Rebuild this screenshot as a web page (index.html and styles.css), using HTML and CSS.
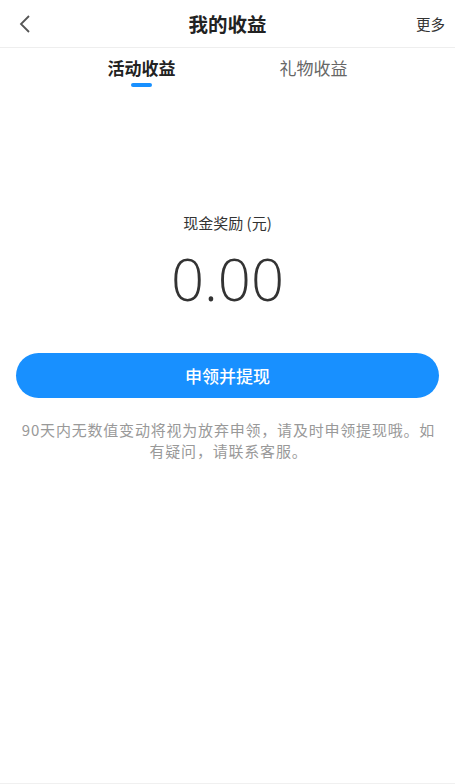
FILE: index.html
```html
<!DOCTYPE html>
<html>
<head lang="zh">
    <meta charset="UTF-8">
    <title>我的收益</title>
    <link rel="stylesheet" href="styles.css">
</head>
<body>
<div id="page">
    <div class="header">
        <span class="back">
            <svg width="12" height="18" viewBox="0 0 12 18"><path d="M10 1 L2 9 L10 17" fill="none" stroke="#555" stroke-width="1.8"/></svg>
        </span>
        <h1 class="title">我的收益</h1>
        <span class="more">更多</span>
    </div>
    <ul class="tabs">
        <li class="selected">活动收益</li>
        <li>礼物收益</li>
    </ul>
    <div class="amount">
        <p class="label">现金奖励 (元)</p>
        <p class="value">0.00</p>
    </div>
    <div class="action">
        <button class="btn">申领并提现</button>
    </div>
    <p class="note">90天内无数值变动将视为放弃申领，请及时申领提现哦。如有疑问，请联系客服。</p>
</div>
</body>
</html>
```

FILE: styles.css
```css
*{
    margin: 0;
    padding: 0;
}
ul{
    list-style: none;
}
html, body{
    height: 100%;
}
body{
    font-family: "Noto Sans CJK SC", "Noto Sans", sans-serif;
    color: #333;
    background: #fff;
}
#page{
    height: 783px;
    border-bottom: 1px solid #f0f0f0;
}
.header{
    height: 47px;
    border-bottom: 1px solid #eee;
    display: flex;
    align-items: center;
    justify-content: space-between;
    padding: 0 10px;
}
.back{
    width: 40px;
    padding-left: 9px;
    box-sizing: border-box;
    display: flex;
    align-items: center;
    height: 20px;
}
.title{
    font-size: 19.5px;
    font-weight: bold;
    color: #222;
}
.more{
    font-size: 14.5px;
    color: #333;
    width: 40px;
    text-align: right;
}
.tabs{
    display: flex;
    justify-content: center;
    gap: 104px;
    padding-top: 6px;
    height: 39px;
}
.tabs li{
    font-size: 17px;
    color: #666;
    position: relative;
    height: 33px;
    line-height: 28px;
}
.tabs li.selected{
    color: #222;
    font-weight: bold;
}
.tabs li.selected:after{
    content: "";
    position: absolute;
    left: 50%;
    bottom: 0;
    width: 21px;
    height: 4px;
    margin-left: -11px;
    border-radius: 2px;
    background: #1890ff;
}
.amount{
    text-align: center;
    padding-top: 119px;
}
.label{
    font-size: 15px;
    color: #333;
    line-height: 22px;
}
.value{
    font-family: "Open Sans", "Noto Sans", sans-serif;
    font-weight: 300;
    font-size: 58px;
    color: #333;
    line-height: 70px;
    margin-top: 10px;
}
.action{
    padding: 39px 16px 0 16px;
}
.btn{
    width: 100%;
    height: 45px;
    border: none;
    border-radius: 23px;
    background: #1890ff;
    color: #fff;
    font-family: "Noto Sans CJK SC", sans-serif;
    font-size: 17px;
    font-weight: 500;
}
.note{
    font-size: 15px;
    color: #999;
    text-align: center;
    line-height: 21px;
    letter-spacing: 0.8px;
    padding: 21px 18px 0 20px;
}
```
